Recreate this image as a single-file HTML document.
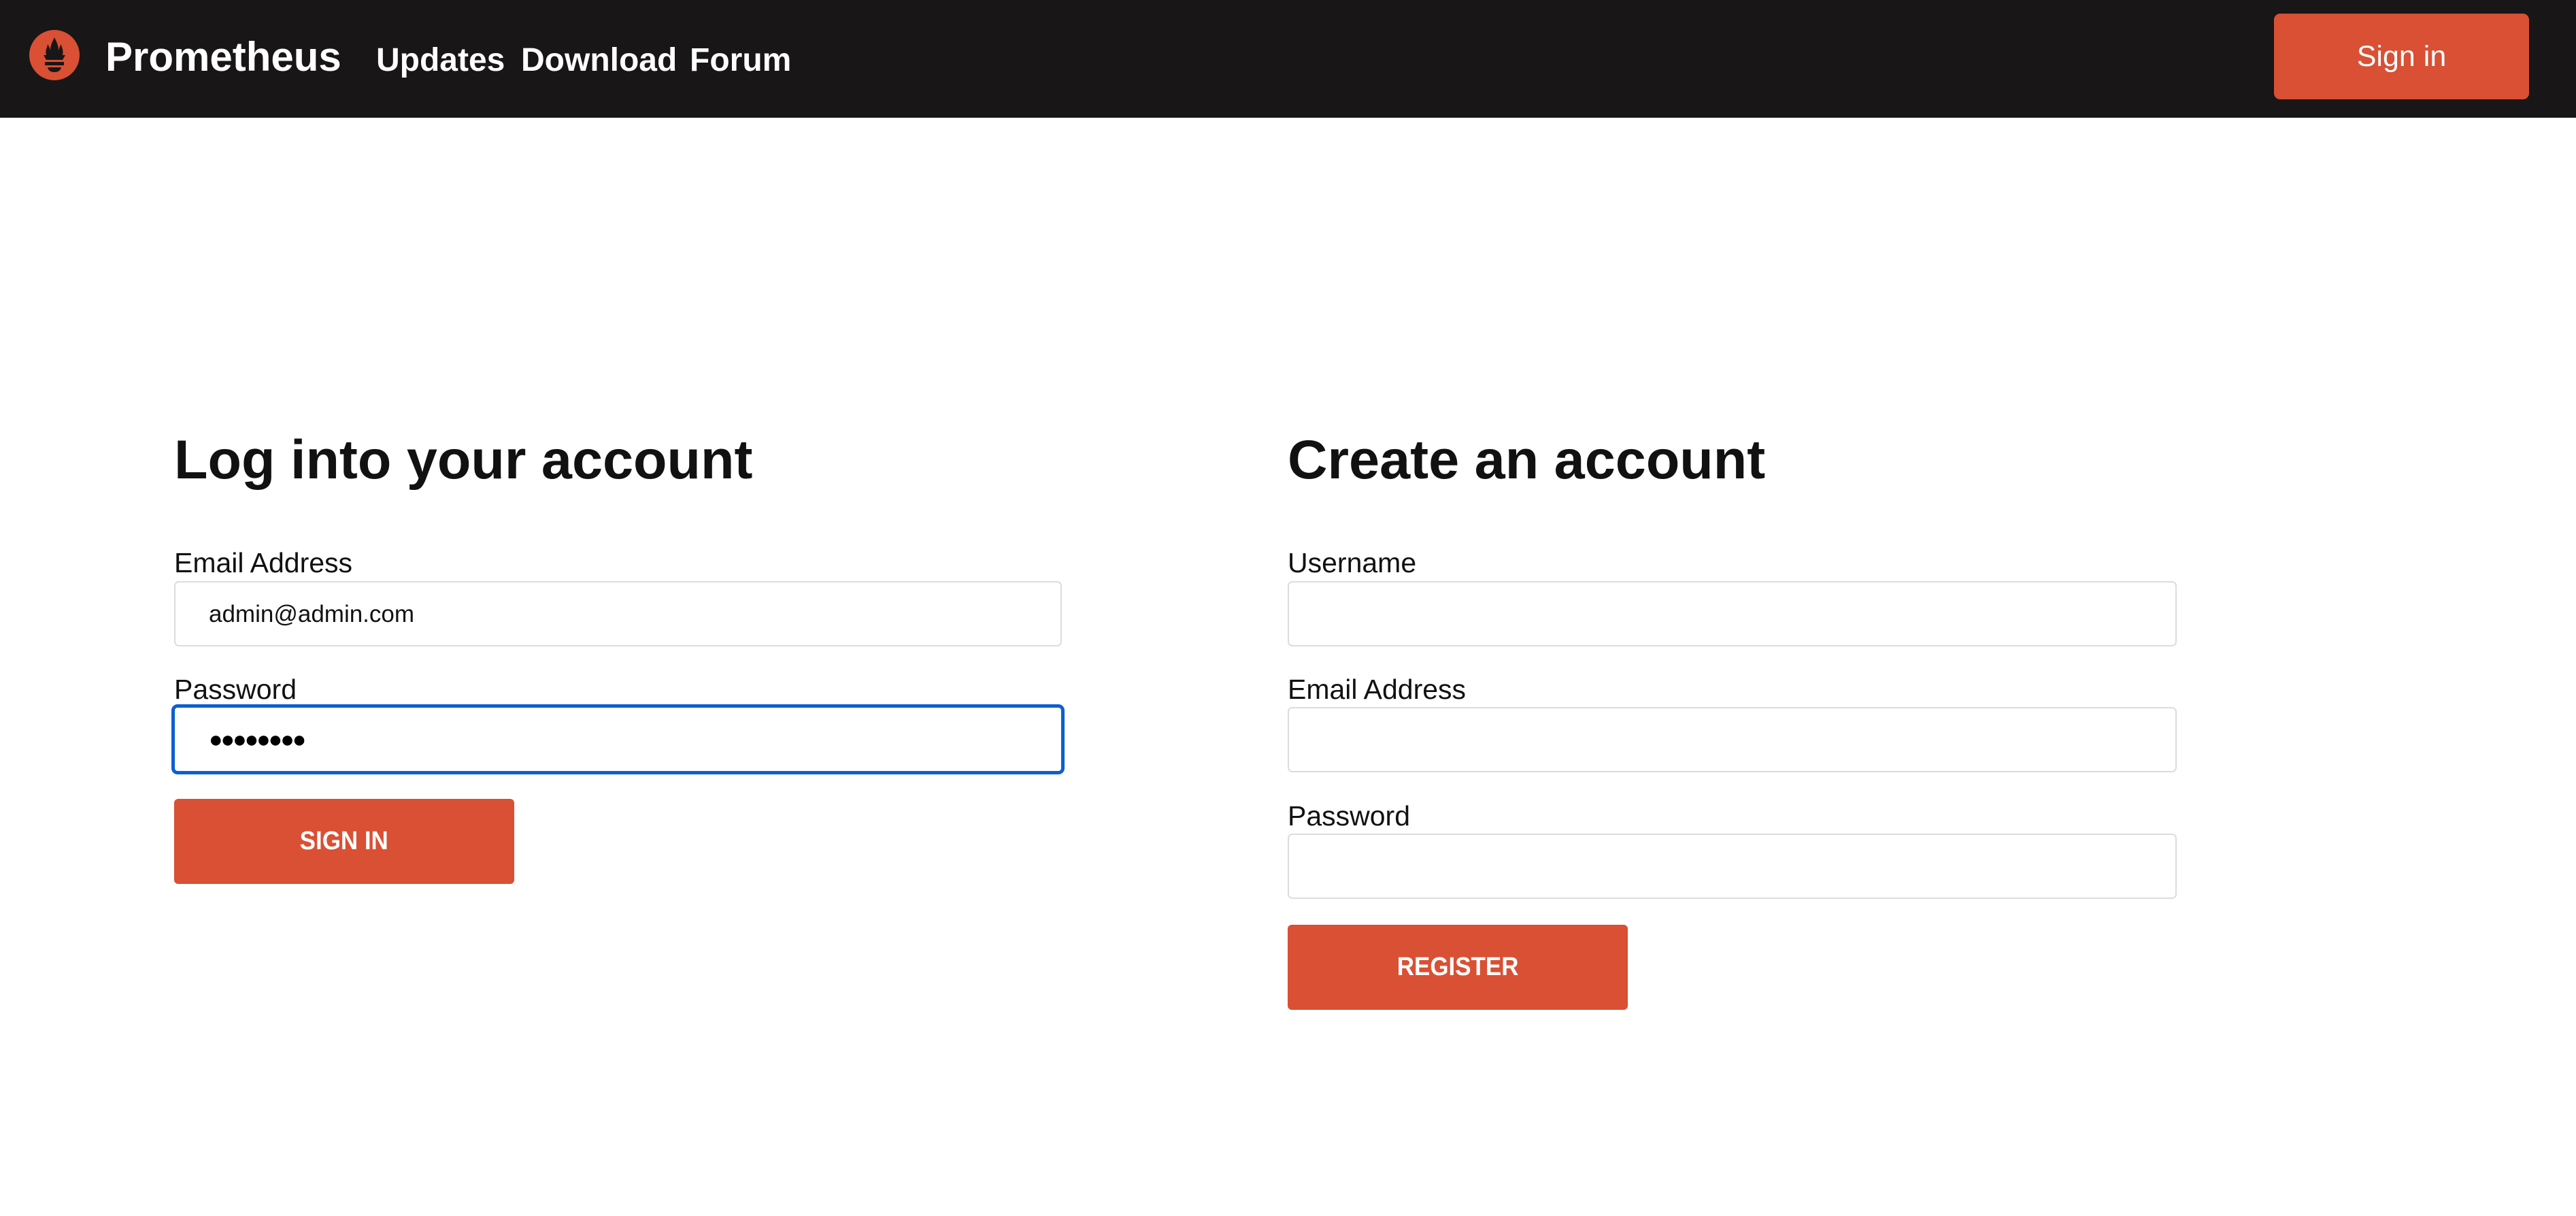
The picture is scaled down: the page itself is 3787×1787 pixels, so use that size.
<!DOCTYPE html>
<html><head><meta charset="utf-8">
<style>
*{margin:0;padding:0;box-sizing:border-box}
html,body{width:3787px;height:1787px;background:#fff;overflow:hidden;font-family:"Liberation Sans",sans-serif;color:#111}
.nav{position:absolute;left:0;top:0;width:3787px;height:173px;background:#181616}
.abs{position:absolute;white-space:nowrap}
.brand{left:155px;top:49px;font-size:60px;font-weight:bold;color:#fff}
.nl{top:61px;font-size:48px;font-weight:bold;color:#fff}
.btnt{left:3343px;top:20px;width:375px;height:126px;background:#d95034;border-radius:9px;color:#fff;font-size:43px;display:flex;align-items:center;justify-content:center}
h1{position:absolute;font-size:81px;font-weight:bold;color:#111;white-space:nowrap}
.lab{position:absolute;font-size:41px;color:#111;white-space:nowrap}
.inp{position:absolute;height:96px;border:2px solid #dcdcdc;border-radius:7px;background:#fff}
.inp.f{border:5px solid #0b5fd0;border-radius:9px}
.btn{position:absolute;width:500px;height:125px;background:#d95034;border-radius:6px;color:#fff;font-size:38px;font-weight:bold;display:flex;align-items:center;justify-content:center}
.btn span{display:inline-block;transform:scaleX(0.92)}
</style></head><body>
<div class="nav"></div>
<svg class="abs" style="left:42px;top:43px" width="76" height="76" viewBox="0 0 76 76">
<circle cx="38" cy="38" r="37" fill="#d95034"/>
<path d="M22 38 L54 38 L50 45 L26 45 Z" fill="#181616"/>
<path d="M26 38 C24 30 28 26 28 22 C31 26 31 29 32 31 C32 24 35 18 38 12 C41 18 44 24 44 31 C45 29 45 26 48 22 C48 26 52 30 50 38 Z" fill="#181616"/>
<rect x="24" y="48" width="28" height="5" fill="#181616"/>
<path d="M28 56 L48 56 C47 61 43 63 38 63 C33 63 29 61 28 56 Z" fill="#181616"/>
</svg>
<div class="abs brand">Prometheus</div>
<div class="abs nl" style="left:553px">Updates</div>
<div class="abs nl" style="left:766px">Download</div>
<div class="abs nl" style="left:1014px">Forum</div>
<div class="abs btnt">Sign in</div>

<h1 style="left:256px;top:630px">Log into your account</h1>
<div class="lab" style="left:256px;top:804px">Email Address</div>
<div class="inp" style="left:256px;top:854px;width:1305px"></div>
<div class="abs" style="left:307px;top:883px;font-size:35px;color:#111">admin@admin.com</div>
<div class="lab" style="left:256px;top:990px">Password</div>
<div class="inp f" style="left:252px;top:1035px;width:1313px;height:103px"></div>
<div class="abs" style="left:307px;top:1068px;font-size:34px;color:#000;letter-spacing:-3px">●●●●●●●●</div>
<div class="btn" style="left:256px;top:1174px"><span>SIGN IN</span></div>

<h1 style="left:1893px;top:630px">Create an account</h1>
<div class="lab" style="left:1893px;top:804px">Username</div>
<div class="inp" style="left:1893px;top:854px;width:1307px"></div>
<div class="lab" style="left:1893px;top:990px">Email Address</div>
<div class="inp" style="left:1893px;top:1039px;width:1307px"></div>
<div class="lab" style="left:1893px;top:1176px">Password</div>
<div class="inp" style="left:1893px;top:1225px;width:1307px"></div>
<div class="btn" style="left:1893px;top:1359px"><span>REGISTER</span></div>
</body></html>
